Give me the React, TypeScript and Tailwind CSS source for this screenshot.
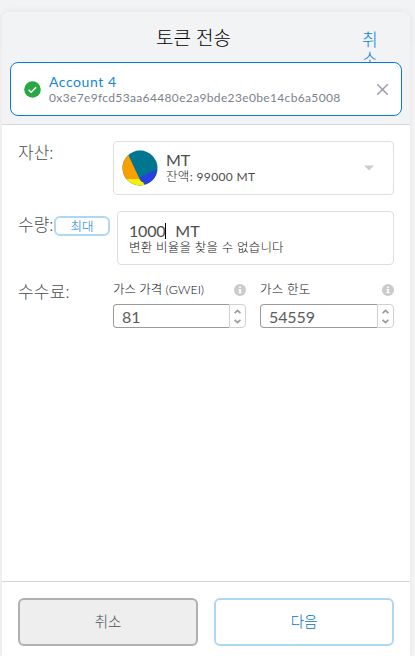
import React from "react";
import { X } from "lucide-react";

function Info() {
  return (
    <svg width="12" height="12" viewBox="0 0 12 12">
      <circle cx="6" cy="6" r="6" fill="#cbcbcb" />
      <path d="M5.2 2.4h1.7v1.5H5.2zM4.6 5h2.3v3.2h.7v1.1H4.5V8.2h.7V6.1h-.6z" fill="#fff" />
    </svg>
  );
}

function GasField({ label, value, tracking }: { label: string; value: string; tracking: string }) {
  return (
    <div>
      <div className="flex h-[13px] items-center justify-between">
        <span className={`text-[12.5px] leading-[13px] whitespace-nowrap text-[#0c0d20] ${tracking}`}>{label}</span>
        <Info />
      </div>
      <div className="mt-2 flex h-6">
        <div className="flex flex-1 items-center rounded-l-[4px] border border-r-0 border-[#9b9b9b] pt-0.5 pl-2 text-base font-normal tracking-[-0.1px] text-[#5c5c5c]">
          {value}
        </div>
        <div className="flex w-[17px] flex-col items-center justify-center gap-[5px] rounded-r-[4px] border border-[#cfcfcf]">
          <svg width="7" height="5" viewBox="0 0 7 5" fill="none" stroke="#9b9b9b" strokeWidth="1.8">
            <path d="M.6 4.2 3.5 1.4l2.9 2.8" />
          </svg>
          <svg width="7" height="5" viewBox="0 0 7 5" fill="none" stroke="#9b9b9b" strokeWidth="1.8">
            <path d="M.6.8 3.5 3.6 6.4.8" />
          </svg>
        </div>
      </div>
    </div>
  );
}

export default function App() {
  return (
    <div className="h-[656px] w-[415px] overflow-hidden bg-[linear-gradient(#f2f3f4_44px,#f5f5f5_44px)] pt-3 pr-[5px] pl-0.5 font-['Lato','Noto_Sans_CJK_KR',sans-serif] font-light">
      <div className="flex h-[644px] flex-col overflow-hidden rounded-t-lg bg-white shadow-[0_0_7px_rgba(0,0,0,0.08)]">
        <header className="h-[113px] shrink-0 border-b border-[#d8d8d8] bg-[#f2f3f4] px-2">
          <div className="flex h-[50px]">
            <h1 className="w-[352px] pt-3 pl-[15px] text-center text-[19px] leading-7 text-black">토큰 전송</h1>
            <div className="h-[50px] w-4 overflow-hidden pt-[18px] text-[17px] leading-[19px] break-all text-[#037dd6]">취소</div>
          </div>
          <div className="flex h-[54px] items-center rounded-lg border border-[#037dd6] bg-white pr-[9px] pl-[13px]">
            <svg width="17" height="17" viewBox="0 0 17 17">
              <circle cx="8.5" cy="8.5" r="8.3" fill="#28a745" />
              <path d="m4.6 8.7 2.5 2.5 5-5" fill="none" stroke="#fff" strokeWidth="1.6" />
            </svg>
            <div className="ml-2 flex-1 pb-px">
              <div className="text-sm leading-[17px] font-normal tracking-[0.57px] text-[#1686d9]">Account 4</div>
              <div className="text-xs leading-[15px] font-normal tracking-[0.35px] whitespace-nowrap text-[#7a828b]">0x3e7e9fcd53aa64480e2a9bde23e0be14cb6a5008</div>
            </div>
            <X size={19} strokeWidth={1.6} absoluteStrokeWidth className="text-[#9b9fae]" />
          </div>
        </header>

        <main className="flex-1 px-4 pt-4 text-[#4d4d4d]">
          <div className="flex h-[54px]">
            <div className="w-[95px] text-[17px] leading-[23px]">자산:</div>
            <div className="flex flex-1 items-center rounded-[4px] border border-[#dedede] pr-[18px] pl-2">
              <svg width="36" height="36" viewBox="0 0 36 36">
                <defs>
                  <clipPath id="token"><circle cx="18" cy="18" r="17.4" /></clipPath>
                </defs>
                <circle cx="18" cy="18" r="17.7" fill="#ddd" />
                <g clipPath="url(#token)">
                  <path fill="#017690" d="M0 0h36v36H0z" />
                  <path fill="#fa9f00" d="M0 0h4l14 30-18 0z" />
                  <path fill="#f8f000" d="M0 29h17l3 3 3-1 2 5H0z" />
                  <path fill="#2542e1" d="m18 27 18-8v17H23l-2-4h-1z" />
                </g>
              </svg>
              <div className="ml-2 flex-1 pb-px">
                <div className="text-base leading-[17px] font-normal">MT</div>
                <div className="text-xs leading-[17px] font-normal tracking-[0.36px]"><span className="text-[12.5px] font-light text-[#222]">잔액</span>: 99000&nbsp;MT</div>
              </div>
              <svg width="12" height="6" viewBox="0 0 12 6"><path d="M1 .5h10L6 5.5z" fill="#ccc" /></svg>
            </div>
          </div>

          <div className="mt-4 flex h-[54px]">
            <div className="flex w-[99px] items-start">
              <span className="w-9 text-[17px] leading-[28px] whitespace-nowrap">수량:</span>
              <button className="mt-[5px] h-5 w-14 rounded-md border-2 border-[#b0d7f2] text-[12.5px] leading-[15px] text-[#037dd6]">최대</button>
            </div>
            <div className="flex-1 rounded-[4px] border border-[#dedede] pt-2.5 pl-[11px]">
              <div className="flex h-[17px] items-center text-base leading-[17px] font-normal">
                <span className="tracking-[-0.2px]">1000</span>
                <span className="h-4 w-px bg-black" />
                <span className="ml-[9px]">MT</span>
              </div>
              <div className="text-[12.5px] leading-[17px] tracking-[0.2px] text-[#222]">변환 비율을 찾을 수 없습니다</div>
            </div>
          </div>

          <div className="mt-[18px] flex">
            <div className="w-[95px] text-[17px] leading-[18px] tracking-[0.2px]">수수료:</div>
            <div className="grid flex-1 grid-cols-[133px_134px] gap-3.5">
              <GasField label="가스 가격 (GWEI)" value="81" tracking="tracking-[-0.05px]" />
              <GasField label="가스 한도" value="54559" tracking="tracking-[0.2px]" />
            </div>
          </div>
        </main>

        <footer className="flex h-[75px] shrink-0 gap-4 border-t border-[#d2d8dd] px-4 pt-4 text-sm">
          <button className="h-12 flex-1 rounded-md border-2 border-[#b0b0b0] bg-[#eee] text-[14.5px] text-[#434c56]">취소</button>
          <button className="h-12 flex-1 rounded-md border-2 border-[#b0d7f2] bg-white text-[14.5px] text-[#0070c8]">다음</button>
        </footer>
      </div>
    </div>
  );
}
